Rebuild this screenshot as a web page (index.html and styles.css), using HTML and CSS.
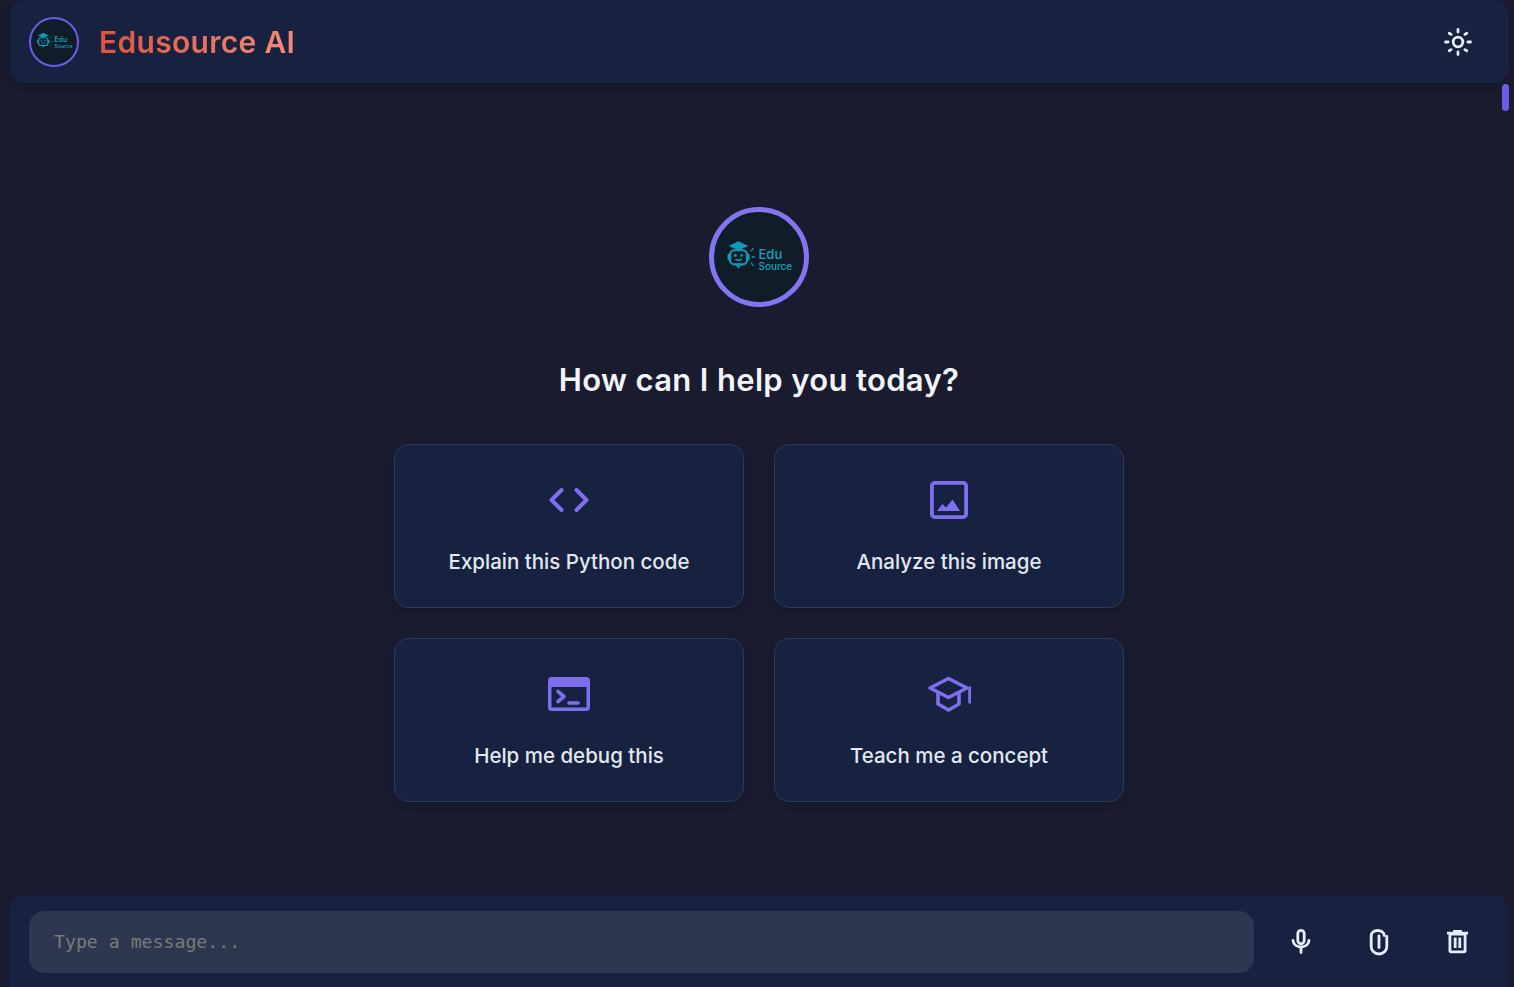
FILE: index.html
```html
<!DOCTYPE html>
<html lang="en">

<head>
    <meta charset="UTF-8">
    <meta name="viewport" content="width=device-width, initial-scale=1.0">
    <title>Edusource AI</title>
    <link rel="stylesheet" href="styles.css">
</head>

<body>
    <div class="app">
        <header class="top-bar">
            <div class="brand">
                <div class="brand-logo">
                    <svg viewBox="0 -1.5 64 40" width="37" height="23" aria-hidden="true">
                        <use href="#edu-logo"></use>
                    </svg>
                </div>
                <h1 class="brand-name">Edusource AI</h1>
            </div>
            <button class="icon-btn theme-btn" aria-label="Toggle theme">
                <svg viewBox="0 0 30 30" width="30" height="30" fill="none" stroke="currentColor" stroke-width="2.8" stroke-linecap="round">
                    <circle cx="15" cy="15" r="4.8"></circle>
                    <path d="M15 2.5v2.6M15 24.9v2.6M2.5 15h2.6M24.9 15h2.6M6.2 6.2l1.9 1.2M21.9 22.6l1.9 1.2M6.2 23.8l1.9-1.2M21.9 7.4l1.9-1.2"></path>
                </svg>
            </button>
        </header>
        <div class="scroll-thumb"></div>

        <main class="welcome">
            <div class="welcome-logo">
                <svg viewBox="0 -1.5 64 40" width="68" height="42" aria-hidden="true">
                    <g id="edu-logo">
                        <path d="M3 8 12.5 3.5 22 8 12.5 12Z" fill="#0e9cba"></path>
                        <rect x="4.5" y="12" width="16" height="13.5" rx="4" fill="none" stroke="#0e9cba" stroke-width="2"></rect>
                        <rect x="2" y="15.5" width="2.5" height="6" rx="1" fill="#0e9cba"></rect>
                        <rect x="20.5" y="15.5" width="2.5" height="6" rx="1" fill="#0e9cba"></rect>
                        <circle cx="9.500" cy="17" r="1.3" fill="#0e9cba"></circle>
                        <circle cx="15.500" cy="17" r="1.3" fill="#0e9cba"></circle>
                        <path d="M9.500 20.500q3 2 6 0M10 25.500l2.500 3 2.500-3" fill="none" stroke="#0e9cba" stroke-width="1.4"></path>
                        <path d="M24.500 13l2-3M25 18.500h3M24.500 24l2 3" fill="none" stroke="#0e9cba" stroke-width="1.2"></path>
                        <text x="31.500" y="20" class="logo-edu">Edu</text>
                        <text x="31.500" y="30.500" class="logo-source">Source</text>
                    </g>
                </svg>
            </div>
            <h2 class="welcome-title">How can I help you today?</h2>

            <div class="suggestions">
                <div class="suggestion-card">
                    <svg class="card-icon" viewBox="0 0 44 40" width="44" height="40" fill="none" stroke="currentColor" stroke-width="4" stroke-linecap="round" stroke-linejoin="round">
                        <path d="M14.500 10 4.500 20l10 10M29.500 10l10 10-10 10"></path>
                    </svg>
                    <span>Explain this Python code</span>
                </div>
                <div class="suggestion-card">
                    <svg class="card-icon" viewBox="0 0 44 40" width="44" height="40" fill="none" stroke="currentColor" stroke-width="3.8">
                        <rect x="4.900" y="2.900" width="34.200" height="34.200" rx="3"></rect>
                        <path d="M10 31 15.500 24l3.500 3.500 6.500-8L33 31Z" fill="currentColor" stroke="none"></path>
                    </svg>
                    <span>Analyze this image</span>
                </div>
                <div class="suggestion-card">
                    <svg class="card-icon" viewBox="0 0 44 40" width="44" height="40" fill="none" aria-hidden="true">
                        <path fill-rule="evenodd" clip-rule="evenodd" d="M5 3h34q4 0 4 4v26q0 4-4 4H5q-4 0-4-4V7q0-4 4-4Zm-.500 10v20.500h35V13Z" fill="currentColor"></path>
                        <path d="M11 17.500l6 5-6 5M22 29h9" stroke="currentColor" stroke-width="3.6" stroke-linecap="round" stroke-linejoin="round"></path>
                    </svg>
                    <span>Help me debug this</span>
                </div>
                <div class="suggestion-card">
                    <svg class="card-icon" viewBox="-1 0 44 40" width="44" height="40" fill="none" stroke="currentColor" stroke-width="3.6" stroke-linecap="round" stroke-linejoin="round">
                        <path d="M2 14 20.500 4.500 39 14 20.500 23.500Z"></path>
                        <path d="M10 19v11l10.500 6 10.500-6V19"></path>
                        <path d="M42 14v14"></path>
                    </svg>
                    <span>Teach me a concept</span>
                </div>
            </div>
        </main>

        <footer class="composer">
            <input class="message-input" type="text" placeholder="Type a message...">
            <div class="composer-actions">
                <button class="icon-btn" aria-label="Voice input">
                    <svg viewBox="0 0 30 30" width="30" height="30" fill="none" stroke="currentColor" stroke-width="2.8" stroke-linecap="round">
                        <rect x="11.800" y="3.400" width="6.400" height="13.400" rx="3.200"></rect>
                        <path d="M7 13.500c.5 4 4 6.500 8 6.500s7.500-2.500 8-6.500M15 20v5.500"></path>
                    </svg>
                </button>
                <button class="icon-btn" aria-label="Attach file">
                    <svg viewBox="0 0 30 30" width="30" height="30" fill="none" stroke="currentColor" stroke-width="2.8" stroke-linecap="round">
                        <path d="M22.800 9.500V19.500a7.800 7.500 0 0 1-15.600 0V8.500a6.500 5 0 0 1 13 0"></path>
                        <path d="M15 9v11.500"></path>
                    </svg>
                </button>
                <button class="icon-btn" aria-label="Clear chat">
                    <svg viewBox="0 0 30 30" width="30" height="30" fill="none" stroke="currentColor" stroke-width="2.8">
                        <path d="M4 6.200h21M11.500 6V4.400h6V6"></path>
                        <rect x="6.900" y="7" width="15.200" height="17.800" rx="1.200"></rect>
                        <path d="M12.200 10.500v10.500M16.800 10.500v10.500"></path>
                    </svg>
                </button>
            </div>
        </footer>
    </div>
</body>

</html>
```

FILE: styles.css
```css
/* Reset */
* {
    margin: 0;
    padding: 0;
    box-sizing: border-box;
}

body {
    font-family: 'Inter', sans-serif;
    background-color: #1a1b2e;
    overflow: hidden;
}

.app {
    position: relative;
    display: flex;
    flex-direction: column;
    height: 100vh;
    padding: 0 5px 0 10px;
}

/* Header */
.top-bar {
    display: flex;
    justify-content: space-between;
    align-items: center;
    height: 83px;
    padding: 0 36px 0 19px;
    background: #172240;
    border-radius: 15px;
    box-shadow: 0 2px 8px rgba(0, 0, 0, 0.12);
}

.brand {
    display: flex;
    align-items: center;
    gap: 20px;
}

.brand-logo {
    display: flex;
    justify-content: center;
    align-items: center;
    width: 50px;
    height: 50px;
    background: #101c28;
    border: 2px solid #6c5ce7;
    border-radius: 50%;
}

.brand-name {
    font-size: 30px;
    font-weight: 600;
    line-height: 1;
    letter-spacing: 0.3px;
    background: linear-gradient(90deg, #e0533c, #f58a7a);
    -webkit-background-clip: text;
    background-clip: text;
    color: transparent;
}

.icon-btn {
    display: flex;
    justify-content: center;
    align-items: center;
    background: none;
    border: none;
    color: #e2eefa;
}

.scroll-thumb {
    position: absolute;
    top: 84px;
    right: 5px;
    width: 7px;
    height: 27px;
    background: #6c5ce7;
    border-radius: 4px;
}

/* Welcome */
.welcome {
    flex: 1;
    display: flex;
    flex-direction: column;
    align-items: center;
    padding: 124px 1px 0 0;
}

.welcome-logo {
    display: flex;
    justify-content: center;
    align-items: center;
    width: 100px;
    height: 100px;
    background: #101c28;
    border: 5px solid #8375f1;
    border-radius: 50%;
}

.logo-edu {
    font-family: 'Inter', sans-serif;
    font-size: 12.5px;
    font-weight: 500;
    fill: #12a3bd;
}

.logo-source {
    font-family: 'Inter', sans-serif;
    font-size: 9.5px;
    font-weight: 500;
    fill: #12a3bd;
}

.welcome-title {
    margin-top: 55px;
    font-size: 31px;
    font-weight: 600;
    line-height: 36px;
    letter-spacing: 0.35px;
    color: #f1f5f9;
}

.suggestions {
    display: grid;
    grid-template-columns: 350px 350px;
    gap: 30px;
    margin-top: 46px;
}

.suggestion-card {
    display: flex;
    flex-direction: column;
    align-items: center;
    height: 164px;
    padding-top: 35px;
    background: #162240;
    border: 1px solid #2f3a58;
    border-radius: 15px;
    box-shadow: 0 4px 6px rgba(0, 0, 0, 0.1);
    font-size: 20.5px;
    font-weight: 500;
    line-height: 26px;
    color: #e2e8f0;
}

.card-icon {
    margin-bottom: 29px;
    color: #7f6ff0;
}

/* Input bar */
.composer {
    display: flex;
    align-items: center;
    height: 92px;
    padding: 2px 12px 0 19px;
    background: #172240;
    border-radius: 15px 15px 0 0;
}

.message-input {
    flex: 1;
    height: 62px;
    padding: 0 25px 2px;
    background: #2f3650;
    border: none;
    border-radius: 15px;
    font-family: 'DejaVu Sans Mono', monospace;
    font-size: 18.2px;
    color: #e2e8f0;
}

.message-input::placeholder {
    color: #7a7a7a;
}

.composer-actions {
    display: flex;
    margin-left: 8px;
}

.composer-actions .icon-btn {
    width: 78.5px;
    height: 62px;
}
```
